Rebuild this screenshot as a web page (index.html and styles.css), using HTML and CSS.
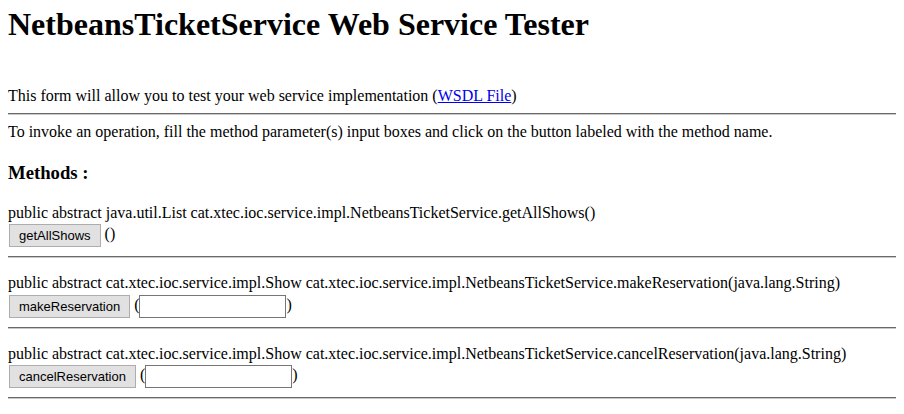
FILE: index.html
```html
<!DOCTYPE html>
<html>
<head>
<meta charset="utf-8">
<title>NetbeansTicketService Web Service Tester</title>
<link rel="stylesheet" href="styles.css">
</head>
<body class="page">
<h1 class="title">NetbeansTicketService Web Service Tester</h1>
<br>
<p class="line">This form will allow you to test your web service implementation (<a class="link" href="#">WSDL File</a>)</p>
<hr class="rule">
<p class="line">To invoke an operation, fill the method parameter(s) input boxes and click on the button labeled with the method name.</p>
<h3 class="methods">Methods :</h3>
<form class="method">
<div class="sig">public abstract java.util.List cat.xtec.ioc.service.impl.NetbeansTicketService.getAllShows()</div>
<div class="call"><button type="button" class="btn">getAllShows</button> ()</div>
</form>
<hr class="rule">
<form class="method">
<div class="sig">public abstract cat.xtec.ioc.service.impl.Show cat.xtec.ioc.service.impl.NetbeansTicketService.makeReservation(java.lang.String)</div>
<div class="call"><button type="button" class="btn">makeReservation</button> (<input class="param" type="text">)</div>
</form>
<hr class="rule">
<form class="method">
<div class="sig">public abstract cat.xtec.ioc.service.impl.Show cat.xtec.ioc.service.impl.NetbeansTicketService.cancelReservation(java.lang.String)</div>
<div class="call"><button type="button" class="btn">cancelReservation</button> (<input class="param" type="text">)</div>
</form>
<hr class="rule">
</body>
</html>
```

FILE: styles.css
```css
html { background: #fff; }
.page {
  margin: 6px 8px 8px;
  font-family: "Liberation Serif", "Times New Roman", serif;
  font-size: 16px;
  color: #000;
}
.title {
  font-size: 32px;
  font-weight: bold;
  margin: 0 0 26.44px;
}
.line { margin: 0; }
.link { color: #0000ee; text-decoration: underline; }
.rule {
  margin: 8px 0;
  border: 0;
  border-top: 1px solid #6a6a6a;
  border-bottom: 1px solid #c8c8c8;
  height: 0;
}
.methods {
  font-size: 18.72px;
  font-weight: bold;
  margin: 20.72px 0 19.72px;
}
.method { margin: 0; }
.rule + .method { margin-top: 16px; }
.sig { line-height: 18.4px; }
.call { padding: 2px 0 1px; }
.btn {
  font-family: "Liberation Sans", Arial, sans-serif;
  font-size: 13px;
  background: #e1e1e1;
  border: 1px solid #adadad;
  color: #000;
  padding: 3px 9px;
  margin: 0 0 0 1px;
  height: 23px;
  line-height: 15px;
  vertical-align: middle;
}
.param {
  font-family: "Liberation Sans", Arial, sans-serif;
  font-size: 13.333px;
  width: 147px;
  height: 23px;
  box-sizing: border-box;
  border: 1px solid #767676;
  padding: 1px 2px;
  margin: 0;
  background: #fff;
  vertical-align: middle;
}
```
